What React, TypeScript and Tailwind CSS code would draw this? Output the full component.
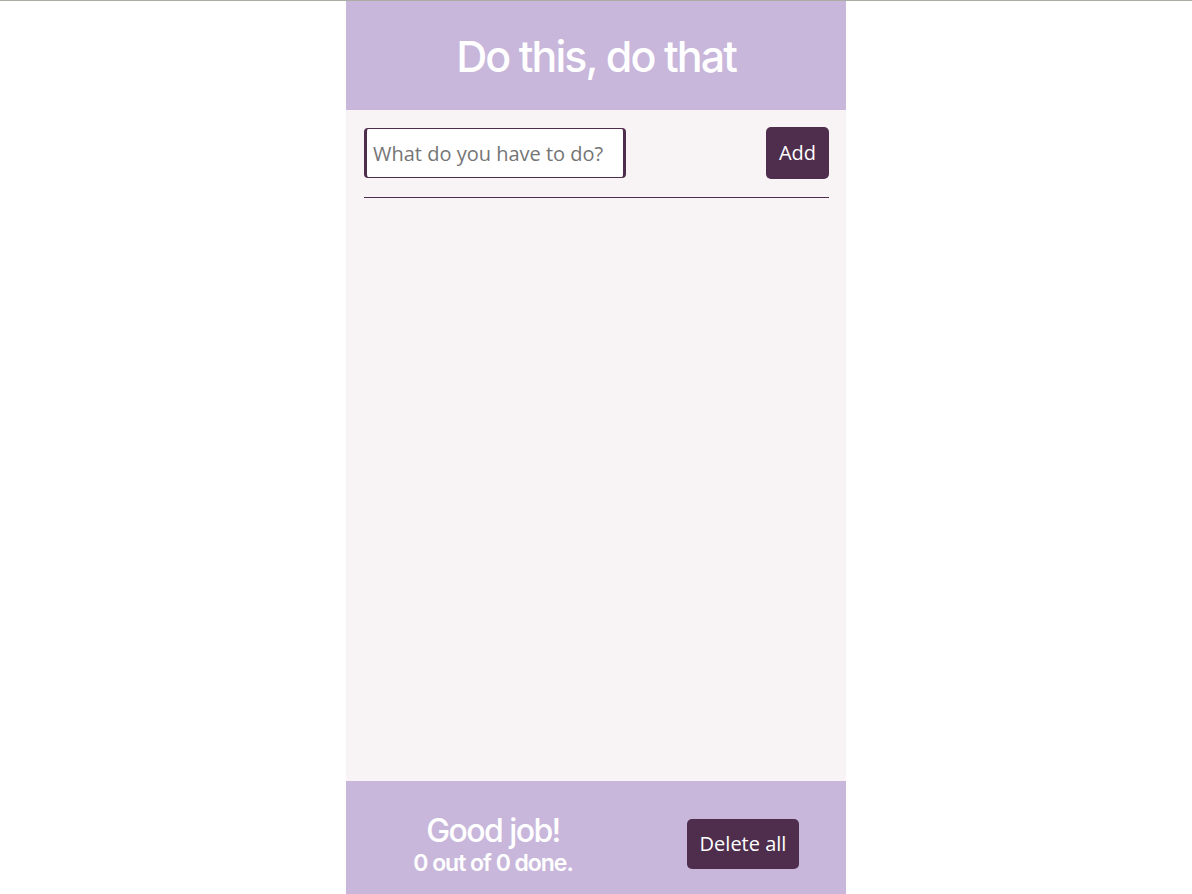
import React from 'react';

const heading = { fontFamily: 'Inter, "Noto Sans", sans-serif' };
const body = { fontFamily: '"Open Sans", "Noto Sans", sans-serif' };

export default function App() {
  return (
    <div className="min-h-screen bg-white">
      <div className="h-px bg-[#aaaba3]" />
      <div className="mx-auto flex h-[893px] w-[500px] flex-col bg-[#f8f3f5]">
        <header className="flex h-[109px] items-center justify-center bg-[#c8b7db]">
          <h1
            className="pt-[2px] text-[43px] font-medium tracking-[-0.045em] text-white"
            style={heading}
          >
            Do this, do that
          </h1>
        </header>

        <main className="flex-1 pl-[18px] pr-[17px] pt-[17px]" style={body}>
          <div className="flex items-center justify-between">
            <input
              type="text"
              placeholder="What do you have to do?"
              className="h-[50px] w-[262px] rounded-[4px] border-x-[3px] border-y border-[#4e2d4d] bg-white px-[6px] text-[20px] text-[#333] placeholder:text-[#757575] outline-none"
              style={body}
            />
            <button className="h-[52px] w-[63px] rounded-[5px] bg-[#4e2d4d] text-[20px] text-white">
              Add
            </button>
          </div>
          <div className="mt-[18px] h-px bg-[#4e2d4d]" />
        </main>

        <footer className="flex h-[113px] items-center bg-[#c8b7db]">
          <div className="mt-[14px] flex w-[294px] flex-col items-center text-white" style={heading}>
            <span className="text-[32px] font-medium leading-[36px] tracking-[-0.05em]">Good job!</span>
            <span className="text-[23px] font-semibold leading-[28px] tracking-[-0.045em]">0 out of 0 done.</span>
          </div>
          <button
            className="ml-[47px] mt-[12px] h-[50px] w-[112px] rounded-[5px] bg-[#4e2d4d] text-[20px] text-white"
            style={body}
          >
            Delete all
          </button>
        </footer>
      </div>
    </div>
  );
}
